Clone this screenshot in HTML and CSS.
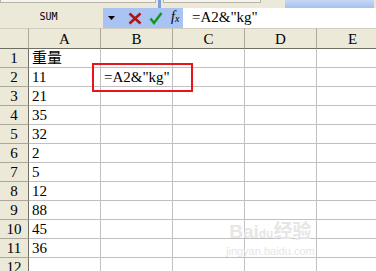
FILE: index.html
```html
<!DOCTYPE html>
<html lang="zh">
<head>
    <meta charset="UTF-8">
    <title>SUM</title>
    <link rel="stylesheet" href="styles.css">
</head>
<body>
    <div class="toolbar-edge">
        <span class="edge-box"></span>
        <span class="edge-blue"></span>
        <span class="edge-box wide"></span>
        <span class="edge-blue right"></span>
    </div>
    <div class="formula-bar">
        <div class="name-box">SUM</div>
        <div class="fx-tools">
            <svg class="drop" width="8" height="5" viewBox="0 0 8 5"><path d="M0 0h7L3.5 4z" fill="#000"/></svg>
            <svg class="cancel" width="14" height="13" viewBox="0 0 14 13"><path d="M1.5 1.5L12.5 11.5M12.5 1.5L1.5 11.5" stroke="#b01414" stroke-width="2.6" fill="none"/></svg>
            <svg class="enter" width="14" height="13" viewBox="0 0 14 13"><path d="M1.5 6.5L5 11L12.5 1" stroke="#12961e" stroke-width="2.4" fill="none"/></svg>
            <span class="fx">f<sub>x</sub></span>
        </div>
        <div class="formula">=A2&amp;"kg"</div>
    </div>
    <div class="sheet">
        <div class="corner"></div>
        <div class="col-head">A</div>
        <div class="col-head">B</div>
        <div class="col-head">C</div>
        <div class="col-head">D</div>
        <div class="col-head">E</div>

        <div class="row-head">1</div><div class="cell">重量</div><div class="cell"></div><div class="cell"></div><div class="cell"></div><div class="cell"></div>
        <div class="row-head">2</div><div class="cell">11</div><div class="cell editing"><span class="edit-box">=A2&amp;"kg"</span></div><div class="cell"></div><div class="cell"></div><div class="cell"></div>
        <div class="row-head">3</div><div class="cell">21</div><div class="cell"></div><div class="cell"></div><div class="cell"></div><div class="cell"></div>
        <div class="row-head">4</div><div class="cell">35</div><div class="cell"></div><div class="cell"></div><div class="cell"></div><div class="cell"></div>
        <div class="row-head">5</div><div class="cell">32</div><div class="cell"></div><div class="cell"></div><div class="cell"></div><div class="cell"></div>
        <div class="row-head">6</div><div class="cell">2</div><div class="cell"></div><div class="cell"></div><div class="cell"></div><div class="cell"></div>
        <div class="row-head">7</div><div class="cell">5</div><div class="cell"></div><div class="cell"></div><div class="cell"></div><div class="cell"></div>
        <div class="row-head">8</div><div class="cell">12</div><div class="cell"></div><div class="cell"></div><div class="cell"></div><div class="cell"></div>
        <div class="row-head">9</div><div class="cell">88</div><div class="cell"></div><div class="cell"></div><div class="cell"></div><div class="cell"></div>
        <div class="row-head">10</div><div class="cell">45</div><div class="cell"></div><div class="cell"></div><div class="cell"></div><div class="cell"></div>
        <div class="row-head">11</div><div class="cell">36</div><div class="cell"></div><div class="cell"></div><div class="cell"></div><div class="cell"></div>
        <div class="row-head">12</div><div class="cell"></div><div class="cell"></div><div class="cell"></div><div class="cell"></div><div class="cell"></div>
    </div>
    <div class="watermark">
        <div class="wm-logo">Bai<span class="paw">du</span>经验</div>
        <div class="wm-url">jingyan.baidu.com</div>
    </div>
</body>
</html>
```

FILE: styles.css
```css
body {
    margin: 0;
    width: 376px;
    height: 271px;
    overflow: hidden;
    position: relative;
    background: #ffffff;
    font-family: "Liberation Serif", "Noto Sans CJK SC", serif;
    color: #000;
}

.toolbar-edge {
    height: 8px;
    background: #ece9d8;
    display: flex;
    align-items: flex-start;
}

.edge-box {
    width: 154px;
    height: 2px;
    background: #f4f3ee;
    border: 1px solid #b8b5a6;
    border-top: none;
}

.edge-box.wide {
    width: 96px;
}

.edge-blue {
    width: 3px;
    height: 8px;
    margin: 0 2px;
    background: #7a9ee0;
}

.edge-blue.right {
    flex: 1;
    margin-left: 24px;
    background: linear-gradient(#c8d8f4, #a6c0ee);
}

.formula-bar {
    height: 20px;
    display: flex;
}

.name-box {
    width: 103px;
    background: #ece9d8;
    font-family: "DejaVu Sans Mono", monospace;
    font-size: 10px;
    line-height: 18px;
    text-align: center;
    padding-right: 6px;
    box-sizing: border-box;
}

.fx-tools {
    width: 80px;
    background: #a9c3f2;
    display: flex;
    align-items: center;
    padding-left: 5px;
    box-sizing: border-box;
}

.drop {
    margin-right: 12px;
}

.cancel {
    margin-right: 7px;
}

.enter {
    margin-right: 8px;
}

.fx {
    font-style: italic;
    font-size: 14px;
    line-height: 14px;
}

.fx sub {
    font-size: 10px;
    vertical-align: -1px;
}

.formula {
    flex: 1;
    background: #fff;
    padding-left: 9px;
    font-size: 15px;
    line-height: 19px;
}

.sheet {
    display: grid;
    grid-template-columns: 29px repeat(5, 72px);
    grid-template-rows: 21px repeat(12, 19px);
}

.corner,
.col-head,
.row-head {
    background: #ece9d8;
    border-right: 1px solid #aca899;
    border-bottom: 1px solid #aca899;
    text-align: center;
    font-size: 15px;
    line-height: 20px;
}

.corner {
    border-top: 1px solid #d0cdbf;
    border-bottom-color: #716f64;
}

.col-head {
    border-top: 1px solid #d0cdbf;
    border-bottom-color: #716f64;
}

.row-head {
    line-height: 18px;
    border-right-color: #716f64;
}

.cell {
    border-right: 1px solid #c0c0c0;
    border-bottom: 1px solid #c0c0c0;
    padding-left: 3px;
    font-size: 15px;
    line-height: 19px;
    white-space: nowrap;
}

.cell.editing {
    position: relative;
    overflow: visible;
}

.edit-box {
    position: absolute;
    left: -9px;
    top: -5px;
    width: 87px;
    height: 25px;
    border: 2px solid #e8141c;
    padding-left: 10px;
    line-height: 25px;
}

.watermark {
    position: absolute;
    left: 226px;
    top: 222px;
    color: #e6e6e6;
    text-align: center;
}

.wm-logo {
    font-family: "Liberation Sans", "Noto Sans CJK SC", sans-serif;
    font-size: 19px;
    font-weight: bold;
    line-height: 20px;
}

.paw {
    font-size: 12px;
}

.wm-url {
    font-family: "Liberation Sans", sans-serif;
    font-size: 11px;
    line-height: 14px;
}
```
